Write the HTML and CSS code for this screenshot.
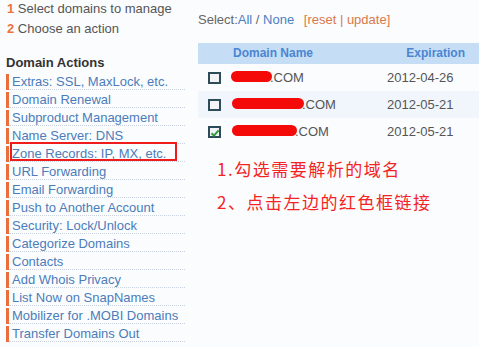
FILE: index.html
```html
<!DOCTYPE html>
<html lang="zh-CN">
<head>
  <meta charset="UTF-8">
  <title>Manage Domains</title>
  <link rel="stylesheet" href="styles.css">
</head>
<body>

  <div class="page">

    <!-- Left: steps and action list -->
    <aside class="sidebar">
      <ol class="steps">
        <li><b>1</b> Select domains to manage</li>
        <li><b>2</b> Choose an action</li>
      </ol>

      <h3 class="actions-title">Domain Actions</h3>
      <ul class="actions">
        <li><a href="#">Extras: SSL, MaxLock, etc.</a></li>
        <li><a href="#">Domain Renewal</a></li>
        <li><a href="#">Subproduct Management</a></li>
        <li><a href="#">Name Server: DNS</a></li>
        <li class="marked"><a href="#">Zone Records: IP, MX, etc.</a><span class="mark-box"></span></li>
        <li><a href="#">URL Forwarding</a></li>
        <li><a href="#">Email Forwarding</a></li>
        <li><a href="#">Push to Another Account</a></li>
        <li><a href="#">Security: Lock/Unlock</a></li>
        <li><a href="#">Categorize Domains</a></li>
        <li><a href="#">Contacts</a></li>
        <li><a href="#">Add Whois Privacy</a></li>
        <li><a href="#">List Now on SnapNames</a></li>
        <li><a href="#">Mobilizer for .MOBI Domains</a></li>
        <li><a href="#">Transfer Domains Out</a></li>
      </ul>
    </aside>

    <!-- Right: domain table -->
    <main class="content">
      <div class="select-bar">
        Select:<a href="#" class="blue">All</a> / <a href="#" class="blue">None</a>
        <span class="tools">[<a href="#">reset</a> | <a href="#">update</a>]</span>
      </div>

      <div class="domain-table">
        <div class="row head">
          <span></span>
          <span>Domain Name</span>
          <span class="exp">Expiration</span>
        </div>
        <div class="row">
          <span><i class="box"></i></span>
          <span><i class="blot" style="width:41px"></i>.COM</span>
          <span>2012-04-26</span>
        </div>
        <div class="row alt">
          <span><i class="box"></i></span>
          <span class="shift"><i class="blot" style="width:72px"></i>.COM</span>
          <span>2012-05-21</span>
        </div>
        <div class="row">
          <span><i class="box checked"><svg viewBox="0 0 10 10" width="10" height="10"><path d="M1.5 5.2 L4 7.6 L8.6 2.4" fill="none" stroke="#2e9a3a" stroke-width="2"/></svg></i></span>
          <span class="shift"><i class="blot" style="width:65px"></i>.COM</span>
          <span>2012-05-21</span>
        </div>
      </div>

      <div class="notes">
        <p>1.勾选需要解析的域名</p>
        <p>2、点击左边的红色框链接</p>
      </div>
    </main>

  </div>

</body>
</html>
```

FILE: styles.css
```css
/* Reset and Global Styles */
* { margin: 0; padding: 0; box-sizing: border-box; }
body {
  font-family: "Liberation Sans", Arial, sans-serif;
  font-size: 13px;
  color: #555;
  background: #fbfcfe;
  width: 479px;
  height: 347px;
  overflow: hidden;
}
a { text-decoration: none; }

.page {
  display: flex;
}

/* Sidebar */
.sidebar {
  width: 198px;
  flex: none;
  padding: 0 13px 0 6px;
}
.steps {
  list-style: none;
  padding-left: 1px;
  line-height: 20px;
  margin-top: -1px;
}
.steps b { color: #e8733e; }

.actions-title {
  font-size: 13px;
  color: #333;
  line-height: 16px;
  margin: 16px 0 3px;
}
.actions { list-style: none; }
.actions li {
  position: relative;
  border-left: 3px solid #ea6f3c;
  margin-bottom: 2px;
}
.actions a {
  display: block;
  color: #4b7dba;
  line-height: 15px;
  padding-left: 3px;
  border-bottom: 1px dotted #c9d2de;
}
.mark-box {
  position: absolute;
  left: 1px;
  top: -4px;
  width: 167px;
  height: 19px;
  border: 2px solid #f01c1c;
}

/* Content */
.content {
  flex: 1;
}
.select-bar {
  padding-top: 12px;
  line-height: 16px;
  margin-bottom: 15px;
  color: #666;
}
.select-bar .blue { color: #4a80c2; }
.tools {
  color: #d9794b;
  margin-left: 6px;
}
.tools a { color: #d9794b; }

.domain-table .row {
  display: grid;
  grid-template-columns: 33px 156px 1fr;
  height: 27px;
  line-height: 27px;
}
.domain-table .row.alt { background: #f1f6fc; }
.domain-table .row.head {
  height: 21px;
  line-height: 21px;
  background: #c6ddf6;
  color: #4a86d2;
  font-size: 12px;
  font-weight: bold;
}
.row.head span:nth-child(2) { padding-left: 2px; }
.row.head .exp {
  text-align: right;
  padding-right: 14px;
}
.row span:first-child { padding-left: 10px; }
.row .shift { padding-left: 1px; }

.box {
  display: inline-block;
  width: 13px;
  height: 12px;
  border: 2px solid #2e4b59;
  background: #f1f3f4;
  vertical-align: middle;
  margin-top: -2px;
  position: relative;
}
.box svg {
  position: absolute;
  left: 0;
  top: 0;
}
.blot {
  display: inline-block;
  height: 11px;
  background: #f50a0a;
  border-radius: 6px;
  vertical-align: middle;
  margin-top: -5px;
  margin-right: -2px;
}

/* Chinese notes */
.notes {
  margin-top: 7px;
  padding-left: 19px;
  color: #f42424;
  font-family: "Noto Sans CJK SC", sans-serif;
  font-size: 17px;
  letter-spacing: 1.5px;
  line-height: 33px;
}
```
